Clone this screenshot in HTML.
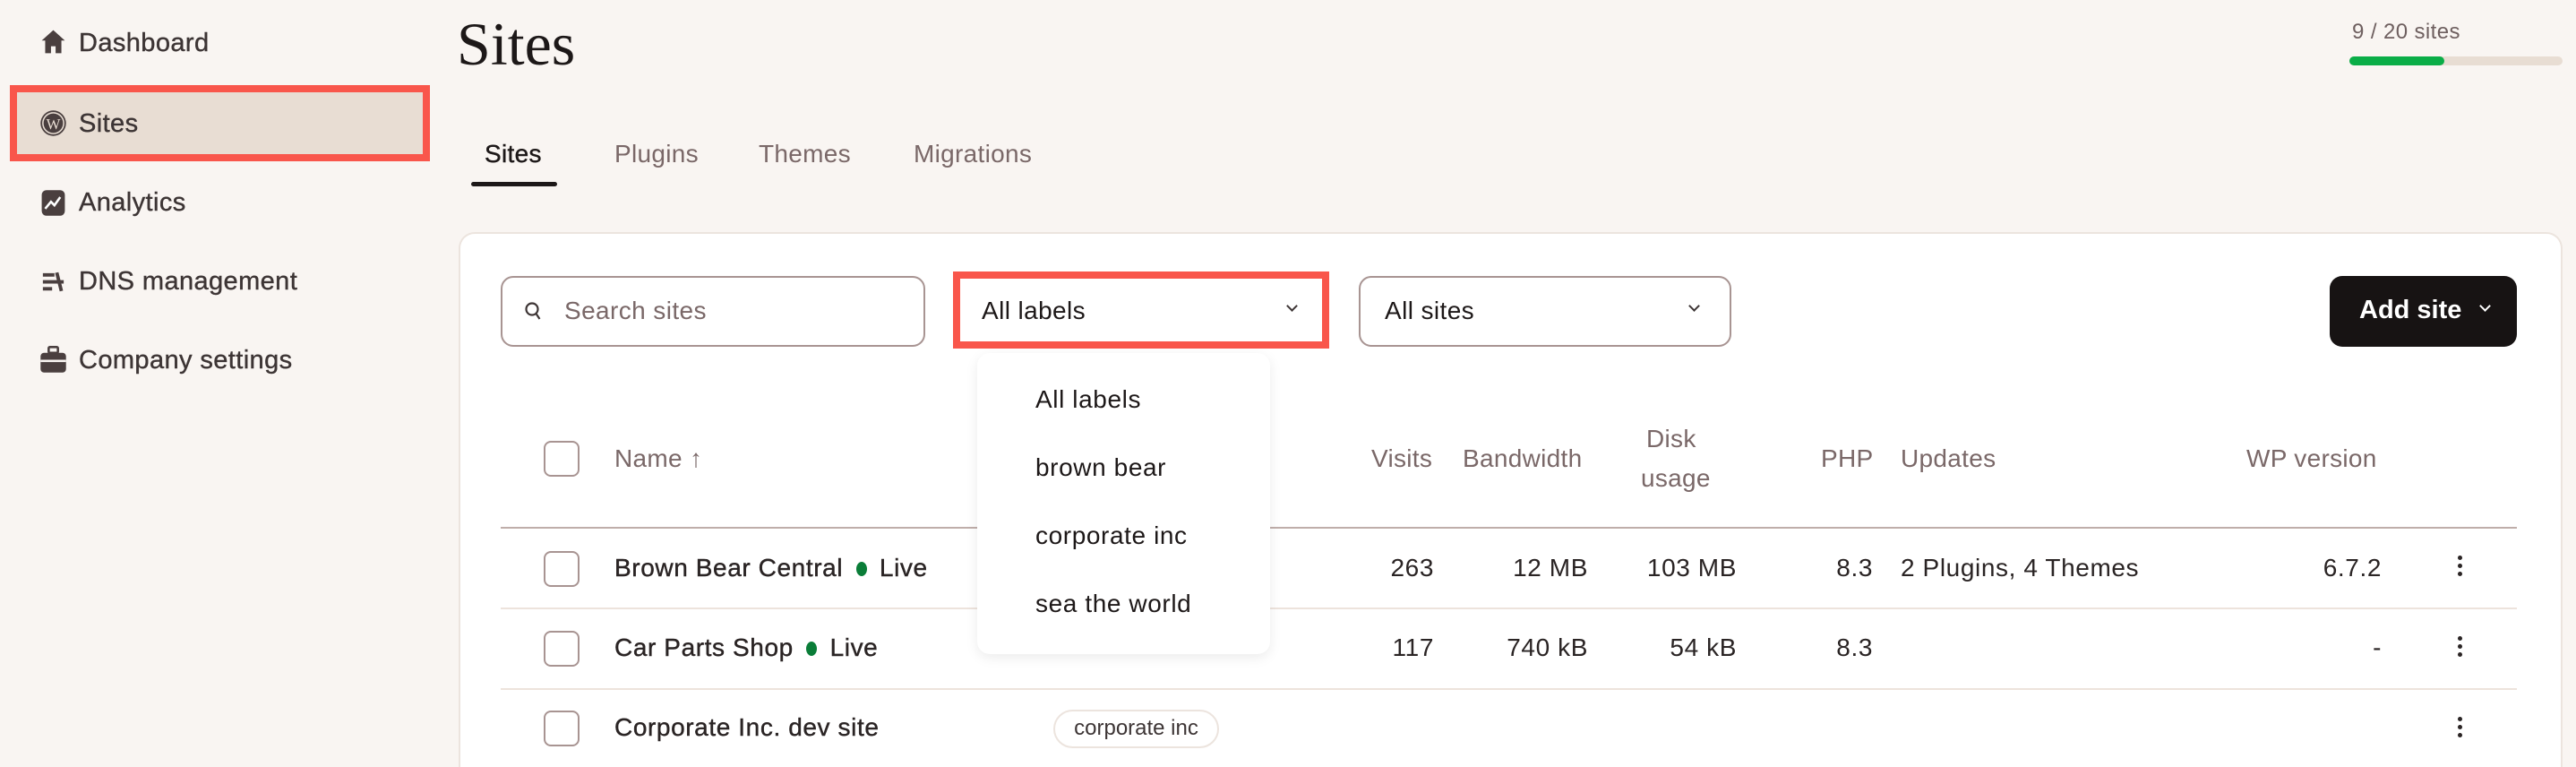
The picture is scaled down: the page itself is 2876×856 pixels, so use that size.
<!DOCTYPE html>
<html style="width:2876px;height:856px;overflow:hidden"><head><meta charset="utf-8"><style>
*{box-sizing:border-box;margin:0;padding:0}
body{width:2876px;height:856px;background:#f9f5f2;font-family:"Liberation Sans",sans-serif;color:#3d3535;position:relative;overflow:hidden}
.a{position:absolute;white-space:nowrap}
.nav{font-size:29px;color:#3d3535;left:88px;line-height:34px;letter-spacing:0.4px;-webkit-text-stroke:0.4px #3d3535}
.ic{position:absolute;left:44px;width:31px;height:31px}
.tab{font-size:28px;color:#7a6868;top:156px;letter-spacing:0.3px}
.card{left:512px;top:259px;width:2349px;height:597px;background:#fff;border:2px solid #ece4de;border-bottom:none;border-radius:18px 18px 0 0}
.inp{border:2px solid #a89492;border-radius:14px;background:#fff;height:79px}
.hd{font-size:28px;color:#7a6868;letter-spacing:0.3px}
.td{font-size:28px;color:#2a2424;letter-spacing:0.6px}
.b{-webkit-text-stroke:0.4px #2a2424}
.cb{position:absolute;left:607px;width:40px;height:40px;border:2px solid #a89492;border-radius:8px;background:#fff}
.line{position:absolute;left:559px;width:2251px;height:2px;background:#ede3dc}
.chev{position:absolute;width:12px;height:12px;border-right:2px solid #3d3535;border-bottom:2px solid #3d3535;transform:rotate(45deg)}
.dots{position:absolute;left:2744px;width:6px}
.dots i{display:block;width:5px;height:5px;border-radius:50%;background:#2a2424;margin-bottom:4px}
</style></head><body>
<svg class="ic" style="top:31px" viewBox="0 0 24 24"><path d="M12 2L2 11h3v11h5v-6h4v6h5V11h3z" fill="#4a3f3f"/></svg>
<div class="a nav" style="top:31px">Dashboard</div>
<div class="a" style="left:11px;top:95px;width:469px;height:85px;border:8px solid #f9564b;background:#e8ddd3"></div>
<svg class="ic" style="top:122px" viewBox="0 0 24 24"><circle cx="12" cy="12" r="11" fill="#4a3f3f"/><circle cx="12" cy="12" r="9" fill="none" stroke="#e8ddd3" stroke-width="1.2"/><text x="12" y="17" font-size="13" text-anchor="middle" fill="#e8ddd3" font-family="Liberation Serif">W</text></svg>
<div class="a nav" style="top:121px">Sites</div>
<svg class="ic" style="top:211px" viewBox="0 0 24 24"><rect x="2" y="1" width="20" height="22" rx="4" fill="#4a3f3f"/><path d="M5 17l5-6 3 3 5-7" stroke="#fff" stroke-width="2" fill="none"/></svg>
<div class="a nav" style="top:209px">Analytics</div>
<svg class="ic" style="top:299px" viewBox="0 0 24 24"><path d="M3 6h10M3 12h18M3 18h8M15 4l4 16" stroke="#4a3f3f" stroke-width="3" fill="none"/></svg>
<div class="a nav" style="top:297px">DNS management</div>
<svg class="ic" style="top:386px" viewBox="0 0 24 24"><rect x="8" y="1" width="8" height="5" rx="1" fill="none" stroke="#4a3f3f" stroke-width="2"/><rect x="1" y="6" width="22" height="17" rx="3" fill="#4a3f3f"/><rect x="1" y="12" width="22" height="2" fill="#f9f5f2"/></svg>
<div class="a nav" style="top:385px">Company settings</div>

<div class="a" style="left:510px;top:10px;font-family:'Liberation Serif',serif;font-size:68px;color:#1d1818">Sites</div>
<div class="a" style="left:2626px;top:22px;font-size:24px;color:#6e5f5f;letter-spacing:0.4px">9 / 20 sites</div>
<div class="a" style="left:2623px;top:63px;width:238px;height:10px;border-radius:5px;background:#e8ddd3"></div>
<div class="a" style="left:2623px;top:63px;width:106px;height:10px;border-radius:5px;background:#0aad47"></div>

<div class="a tab" style="left:541px;color:#1d1818;-webkit-text-stroke:0.4px #1d1818">Sites</div>
<div class="a" style="left:526px;top:203px;width:96px;height:5px;background:#1d1818;border-radius:3px"></div>
<div class="a tab" style="left:686px">Plugins</div>
<div class="a tab" style="left:847px">Themes</div>
<div class="a tab" style="left:1020px">Migrations</div>

<div class="a card"></div>
<div class="a inp" style="left:559px;top:308px;width:474px"></div>
<svg class="a" style="left:585px;top:336px" width="22" height="24" viewBox="0 0 22 24"><circle cx="9" cy="9" r="6.5" fill="none" stroke="#3d3535" stroke-width="2.2"/><path d="M13.5 14l4 6" stroke="#3d3535" stroke-width="2.2"/></svg>
<div class="a" style="left:630px;top:331px;font-size:28px;color:#7a6868;letter-spacing:0.4px">Search sites</div>

<div class="a" style="left:1064px;top:303px;width:420px;height:86px;border:8px solid #f9564b;background:#fff"></div>
<div class="a" style="left:1096px;top:331px;font-size:28px;color:#1d1818;letter-spacing:0.4px">All labels</div>
<div class="chev" style="left:1438px;top:337px;width:9px;height:9px"></div>

<div class="a inp" style="left:1517px;top:308px;width:416px"></div>
<div class="a" style="left:1546px;top:331px;font-size:28px;color:#1d1818;letter-spacing:0.4px">All sites</div>
<div class="chev" style="left:1887px;top:337px;width:9px;height:9px"></div>

<div class="a" style="left:2601px;top:308px;width:209px;height:79px;background:#171313;border-radius:14px"></div>
<div class="a" style="left:2634px;top:330px;font-size:29px;font-weight:bold;color:#fff">Add site</div>
<div class="chev" style="left:2770px;top:337px;width:9px;height:9px;border-color:#fff"></div>

<div class="cb" style="top:492px"></div>
<div class="a hd" style="left:686px;top:496px">Name ↑</div>
<div class="a hd" style="left:1531px;top:496px">Visits</div>
<div class="a hd" style="left:1633px;top:496px">Bandwidth</div>
<div class="a hd" style="left:1838px;top:474px">Disk</div>
<div class="a hd" style="left:1832px;top:518px">usage</div>
<div class="a hd" style="left:2033px;top:496px">PHP</div>
<div class="a hd" style="left:2122px;top:496px">Updates</div>
<div class="a hd" style="left:2508px;top:496px">WP version</div>
<div class="line" style="top:588px;background:#bfaeaa"></div>

<div class="cb" style="top:615px"></div>
<div class="a td b" style="left:686px;top:618px">Brown Bear Central <span style="display:inline-block;width:12px;height:16px;border-radius:50%;background:#0a7d38;margin:0 6px"></span> Live</div>
<div class="a td" style="left:1531px;top:618px;width:70px;text-align:right">263</div>
<div class="a td" style="left:1673px;top:618px;width:100px;text-align:right">12 MB</div>
<div class="a td" style="left:1800px;top:618px;width:139px;text-align:right">103 MB</div>
<div class="a td" style="left:2020px;top:618px;width:71px;text-align:right">8.3</div>
<div class="a td" style="left:2122px;top:618px">2 Plugins, 4 Themes</div>
<div class="a td" style="left:2560px;top:618px;width:99px;text-align:right">6.7.2</div>
<div class="dots" style="top:620px"><i></i><i></i><i></i></div>
<div class="line" style="top:678px"></div>

<div class="cb" style="top:704px"></div>
<div class="a td b" style="left:686px;top:707px">Car Parts Shop <span style="display:inline-block;width:12px;height:16px;border-radius:50%;background:#0a7d38;margin:0 6px"></span> Live</div>
<div class="a td" style="left:1531px;top:707px;width:70px;text-align:right">117</div>
<div class="a td" style="left:1673px;top:707px;width:100px;text-align:right">740 kB</div>
<div class="a td" style="left:1800px;top:707px;width:139px;text-align:right">54 kB</div>
<div class="a td" style="left:2020px;top:707px;width:71px;text-align:right">8.3</div>
<div class="a td" style="left:2560px;top:707px;width:99px;text-align:right">-</div>
<div class="dots" style="top:710px"><i></i><i></i><i></i></div>
<div class="line" style="top:768px"></div>

<div class="cb" style="top:793px"></div>
<div class="a td b" style="left:686px;top:796px">Corporate Inc. dev site</div>
<div class="a" style="left:1176px;top:792px;width:185px;height:43px;border:2px solid #ece4de;border-radius:22px;font-size:24px;color:#3d3535;text-align:center;line-height:38px">corporate inc</div>
<div class="dots" style="top:800px"><i></i><i></i><i></i></div>

<div class="a" style="left:1091px;top:394px;width:327px;height:336px;background:#fff;border-radius:14px;box-shadow:0 4px 14px rgba(0,0,0,0.08)"></div>
<div class="a td" style="left:1156px;top:430px;color:#1d1818">All labels</div>
<div class="a td" style="left:1156px;top:506px;color:#1d1818">brown bear</div>
<div class="a td" style="left:1156px;top:582px;color:#1d1818">corporate inc</div>
<div class="a td" style="left:1156px;top:658px;color:#1d1818">sea the world</div>
</body></html>
